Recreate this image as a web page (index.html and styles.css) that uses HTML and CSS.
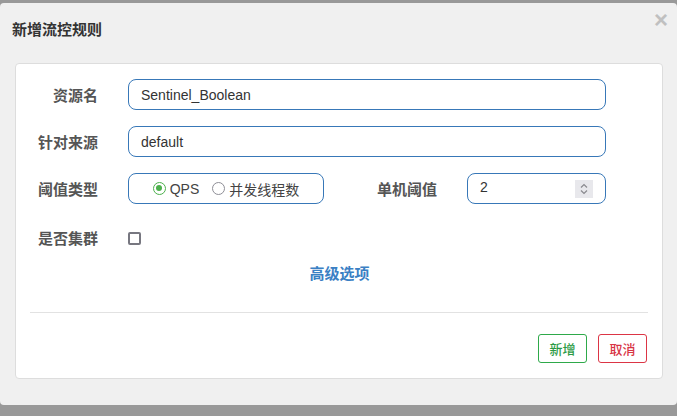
FILE: index.html
```html
<!DOCTYPE html>
<html lang="zh">
<head>
<meta charset="utf-8">
<title>新增流控规则</title>
<link rel="stylesheet" href="styles.css">
</head>
<body>
<div class="dialog">
  <div class="dialog-header">
    <h3 class="dialog-title">新增流控规则</h3>
    <span class="close">&times;</span>
  </div>
  <div class="card">
    <div class="form-row">
      <label class="label">资源名</label>
      <div class="input wide">Sentinel_Boolean</div>
    </div>
    <div class="form-row">
      <label class="label">针对来源</label>
      <div class="input wide">default</div>
    </div>
    <div class="form-row">
      <label class="label">阈值类型</label>
      <div class="input radio-group">
        <span class="radio checked"></span><span class="radio-text">QPS</span>
        <span class="radio"></span><span class="radio-text">并发线程数</span>
      </div>
      <label class="label label-second">单机阈值</label>
      <div class="input number">
        <span>2</span>
        <span class="spinner">
          <svg width="18" height="18" viewBox="0 0 18 18"><path d="M6 7.5 L9 4.5 L12 7.5" fill="none" stroke="#8a8a8f" stroke-width="1.2"/><path d="M6 10.5 L9 13.5 L12 10.5" fill="none" stroke="#8a8a8f" stroke-width="1.2"/></svg>
        </span>
      </div>
    </div>
    <div class="form-row row-check">
      <label class="label">是否集群</label>
      <span class="checkbox"></span>
    </div>
    <div class="advanced"><a class="link">高级选项</a></div>
    <hr class="divider">
    <div class="actions">
      <button class="btn btn-add">新增</button>
      <button class="btn btn-cancel">取消</button>
    </div>
  </div>
</div>
</body>
</html>
```
FILE: styles.css
```css
html, body {
  margin: 0;
  padding: 0;
}
body {
  background: #999999;
  font-family: "Liberation Sans", "Noto Sans CJK SC", sans-serif;
  font-size: 14px;
  color: #333;
  height: 416px;
  overflow: hidden;
}
.dialog {
  margin-top: 3px;
  height: 402px;
  background: #f0f0f0;
  border-radius: 4px;
  box-sizing: border-box;
  padding: 0 14px 0 15px;
}
.dialog-header {
  position: relative;
  height: 60px;
}
.dialog-title {
  margin: 0;
  position: relative;
  left: -3px;
  top: 17px;
  font-size: 15px;
  line-height: 20px;
  font-weight: bold;
  color: #333;
}
.close {
  position: absolute;
  right: -5px;
  top: 5px;
  font-size: 24px;
  line-height: 24px;
  font-weight: bold;
  color: #c0c0c0;
}
.card {
  background: #fff;
  border: 1px solid #dddddd;
  border-radius: 4px;
  height: 316px;
  box-sizing: border-box;
  padding-top: 15px;
}
.form-row {
  display: flex;
  align-items: center;
  height: 31px;
  margin-bottom: 16px;
}
.label {
  width: 82px;
  text-align: right;
  margin-right: 30px;
  font-weight: bold;
  color: #555;
  font-size: 15px;
}
.label-second {
  width: 61px;
  margin-left: 52px;
}
.input {
  box-sizing: border-box;
  height: 31px;
  border: 1px solid #3878b8;
  border-radius: 8px;
  display: flex;
  align-items: center;
  padding: 0 12px;
  color: #333;
  font-size: 14px;
}
.wide {
  width: 478px;
}
.radio-group {
  width: 196px;
  justify-content: center;
  padding: 0;
}
.radio {
  width: 13px;
  height: 13px;
  box-sizing: border-box;
  border-radius: 50%;
  border: 1.5px solid #8e8e96;
  margin-right: 4px;
  position: relative;
}
.radio.checked {
  border: 1.5px solid #4cb04c;
}
.radio.checked::after {
  content: "";
  position: absolute;
  left: 2px;
  top: 2px;
  width: 6px;
  height: 6px;
  border-radius: 50%;
  background: #4cb04c;
}
.radio-text {
  margin-right: 13px;
  color: #444;
}
.radio-text:last-child {
  margin-right: 0;
}
.number {
  width: 139px;
  justify-content: space-between;
  padding-right: 12px;
  padding-bottom: 4px;
}
.spinner {
  width: 18px;
  height: 18px;
  background: #e8e8ec;
  display: flex;
  margin-top: 4px;
}
.row-check {
  margin-top: 18px;
  margin-bottom: 0;
}
.checkbox {
  width: 13px;
  height: 13px;
  box-sizing: border-box;
  border: 2px solid #777780;
  border-radius: 2px;
  margin-top: 2px;
}
.advanced {
  text-align: center;
  margin-top: 11px;
  height: 20px;
  line-height: 20px;
  padding-left: 1px;
}
.link {
  color: #3a80c4;
  font-weight: 600;
  font-size: 15px;
}
.divider {
  border: 0;
  border-top: 1px solid #e2e2e2;
  margin: 28px 14px 0 14px;
  height: 0;
}
.actions {
  display: flex;
  justify-content: flex-end;
  gap: 11px;
  margin-top: 21px;
  padding-right: 15px;
}
.btn {
  width: 49px;
  height: 29px;
  background: #fff;
  border-radius: 3px;
  font-family: "Noto Sans CJK SC", sans-serif;
  font-size: 13px;
  font-weight: 500;
  padding: 0;
}
.btn-add {
  border: 1px solid #2ea94a;
  color: #2a9a44;
}
.btn-cancel {
  border: 1px solid #dc3545;
  color: #d83444;
}
```
